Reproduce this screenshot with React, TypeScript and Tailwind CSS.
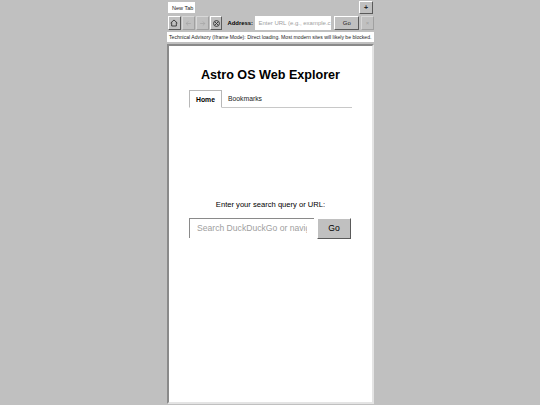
import React from "react";

const raised = "border border-t-white border-l-white border-r-[#5a5a5a] border-b-[#5a5a5a] bg-[#c0c0c0]";
const disabled = "border border-t-[#d8d8d8] border-l-[#d8d8d8] border-r-[#a0a0a0] border-b-[#a0a0a0] bg-[#c0c0c0]";

function HomeIcon() {
  return (
    <svg width="8" height="8" viewBox="0 0 24 24" fill="none" stroke="#222" strokeWidth="2.4">
      <path d="M2 12 12 3l10 9" />
      <path d="M5 10v11h14V10" />
    </svg>
  );
}

function Arrow({ dir }: { dir: "l" | "r" }) {
  return (
    <svg width="7" height="7" viewBox="0 0 24 24" fill="none" stroke="#a4a4a4" strokeWidth="2.4">
      {dir === "l" ? <path d="M20 12H4m7-7-7 7 7 7" /> : <path d="M4 12h16m-7-7 7 7-7 7" />}
    </svg>
  );
}

function StopIcon() {
  return (
    <svg width="7" height="7" viewBox="0 0 24 24" fill="none" stroke="#333" strokeWidth="3.2">
      <circle cx="12" cy="12" r="10" />
      <path d="M7 7l10 10M17 7L7 17" />
    </svg>
  );
}

export default function App() {
  return (
    <div className="w-[540px] h-[405px] bg-[#c0c0c0] overflow-hidden flex justify-center" style={{ fontFamily: '"Liberation Sans", Arial, sans-serif' }}>
      <div className="w-[207px] ml-[1px] h-[405px] flex flex-col">
        <div className="h-[14px] flex justify-between items-end pl-[1px]">
          <div className="w-[27px] h-[11px] mb-[1px] bg-white text-[5.5px] leading-[13px] pl-[4px] text-[#222]">New Tab</div>
          <div className={`${raised} w-[14px] h-[13px] text-[7px] leading-[11px] text-center font-bold mr-[1px] text-[#222]`}>+</div>
        </div>
        <div className="h-[18px] flex items-center gap-[1px] pl-[1px]">
          <div className={`${raised} w-[13px] h-[14px] flex items-center justify-center`}><HomeIcon /></div>
          <div className={`${disabled} w-[13px] h-[14px] flex items-center justify-center`}><Arrow dir="l" /></div>
          <div className={`${disabled} w-[13px] h-[14px] flex items-center justify-center`}><Arrow dir="r" /></div>
          <div className={`${raised} w-[13px] h-[14px] flex items-center justify-center`}><StopIcon /></div>
          <span className="text-[5.9px] font-bold ml-[3px] pl-[1px] w-[26px] whitespace-nowrap text-black">Address:</span>
          <div className="w-[77px] h-[14px] bg-white ml-[2px] text-[6px] leading-[14px] pl-[3px] text-[#a0a0a0] overflow-hidden whitespace-nowrap">Enter URL (e.g., example.c</div>
          <div className={`${raised} w-[25px] h-[14px] ml-[2px] text-[6px] leading-[12px] text-center text-[#222]`}>Go</div>
          <div className={`${disabled} w-[13px] h-[14px] ml-[1px] text-[6px] leading-[12px] text-center text-[#a0a0a0]`}>×</div>
        </div>
        <div className="h-[10px] bg-white text-[5.1px] leading-[10px] whitespace-nowrap pl-[2px] text-[#222] overflow-hidden">Technical Advisory (Iframe Mode): Direct loading. Most modern sites will likely be blocked.</div>
        <div className="flex-1 mt-[2px] mb-[1px] bg-white border-2 border-t-[#8a8a8a] border-l-[#8a8a8a] border-r-[#e4e4e4] border-b-[#e4e4e4] flex flex-col px-[20px]">
          <h1 className="text-[12.6px] font-bold text-center text-black mt-[20px] leading-[18px]">Astro OS Web Explorer</h1>
          <div className="flex mt-[6px] border-b border-[#c8c8c8] h-[18px]">
            <div className="w-[33px] h-[18px] border border-[#b8b8b8] border-b-white text-[6.8px] font-bold text-center leading-[17px] text-black">Home</div>
            <div className="text-[6.8px] leading-[17px] ml-[6px] text-[#222]">Bookmarks</div>
          </div>
          <p className="text-[7.6px] text-center text-black mt-[91px] leading-[12px]">Enter your search query or URL:</p>
          <div className="flex mt-[7px] h-[21px]">
            <div className="w-[125px] h-[20px] bg-white border-l border-t border-[#8a8a8a] pl-[7px] pr-[7px]">
              <div className="text-[8.6px] leading-[19px] text-[#a0a0a0] overflow-hidden whitespace-nowrap">Search DuckDuckGo or navig</div>
            </div>
            <div className={`${raised} w-[34px] h-[21px] ml-[3px] text-[8.6px] leading-[19px] text-center text-black`}>Go</div>
          </div>
        </div>
      </div>
    </div>
  );
}
